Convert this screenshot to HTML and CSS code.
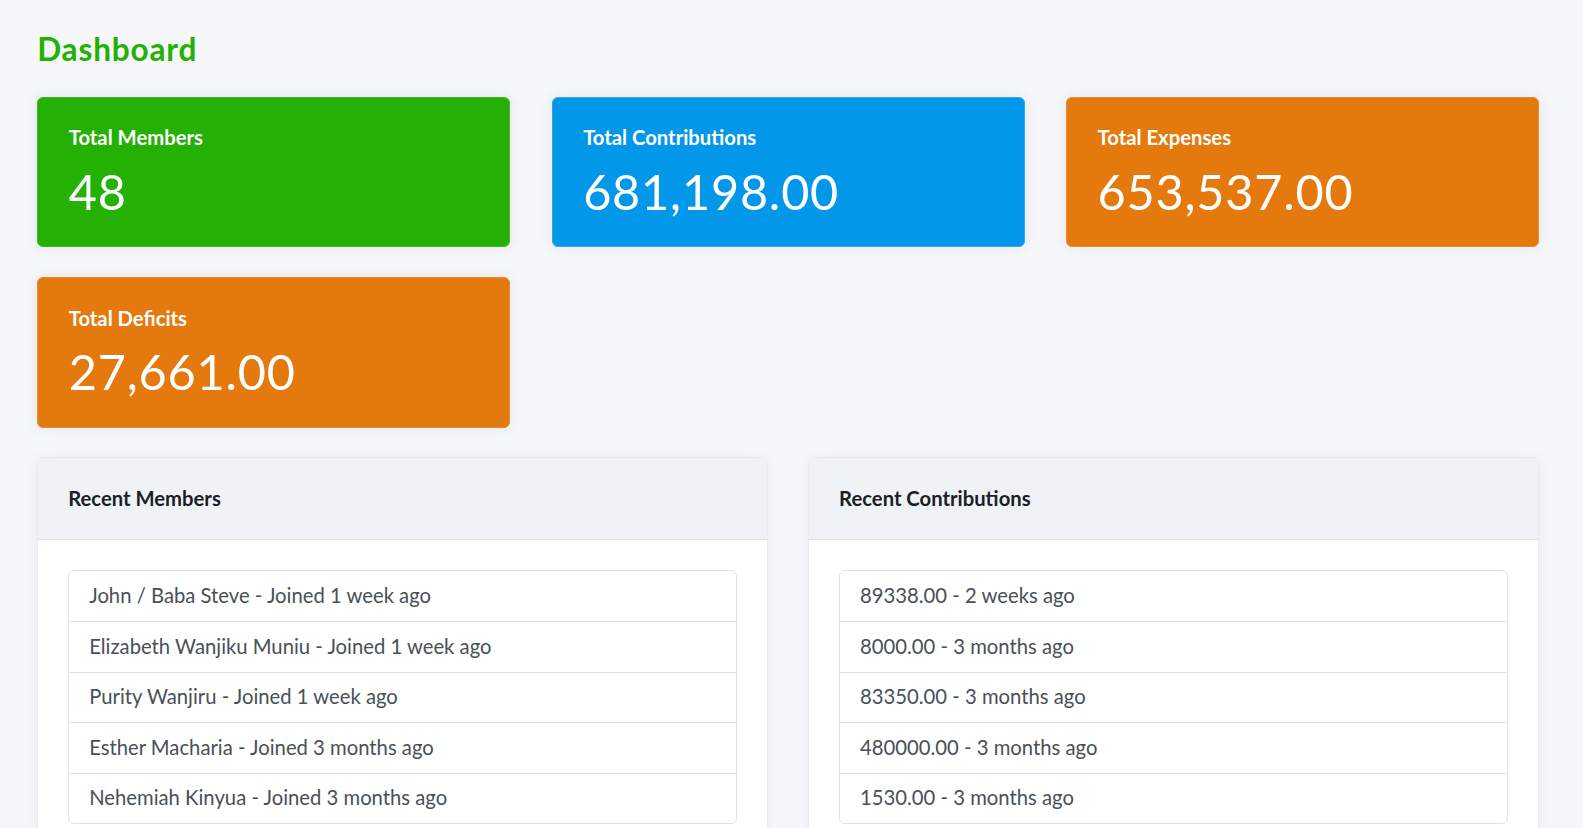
FILE: index.html
```html
<!DOCTYPE html>
<html lang="en">
<head>
  <meta charset="UTF-8">
  <meta name="viewport" content="width=device-width, initial-scale=1.0">
  <title>Dashboard</title>
  <link rel="stylesheet" href="styles.css">
</head>
<body>
  <main class="content">
    <h1 class="page-title">Dashboard</h1>

    <!-- Stat cards -->
    <div class="stats">
      <div class="stat-card stat-green">
        <h5 class="stat-title">Total Members</h5>
        <div class="stat-value">48</div>
      </div>
      <div class="stat-card stat-blue">
        <h5 class="stat-title">Total Contributions</h5>
        <div class="stat-value">681,198.00</div>
      </div>
      <div class="stat-card stat-orange">
        <h5 class="stat-title">Total Expenses</h5>
        <div class="stat-value">653,537.00</div>
      </div>
      <div class="stat-card stat-orange">
        <h5 class="stat-title">Total Deficits</h5>
        <div class="stat-value">27,661.00</div>
      </div>
    </div>

    <!-- Recent lists -->
    <div class="panels">
      <div class="panel">
        <div class="panel-header">
          <h5 class="panel-title">Recent Members</h5>
        </div>
        <div class="panel-body">
          <ul class="list">
            <li>John / Baba Steve - Joined 1 week ago</li>
            <li>Elizabeth Wanjiku Muniu - Joined 1 week ago</li>
            <li>Purity Wanjiru - Joined 1 week ago</li>
            <li>Esther Macharia - Joined 3 months ago</li>
            <li>Nehemiah Kinyua - Joined 3 months ago</li>
          </ul>
        </div>
      </div>

      <div class="panel">
        <div class="panel-header">
          <h5 class="panel-title">Recent Contributions</h5>
        </div>
        <div class="panel-body">
          <ul class="list">
            <li>89338.00 - 2 weeks ago</li>
            <li>8000.00 - 3 months ago</li>
            <li>83350.00 - 3 months ago</li>
            <li>480000.00 - 3 months ago</li>
            <li>1530.00 - 3 months ago</li>
          </ul>
        </div>
      </div>
    </div>
  </main>
</body>
</html>
```

FILE: styles.css
```css
/* Reset */
* {
  margin: 0;
  padding: 0;
  box-sizing: border-box;
}

body {
  font-family: Lato, "Open Sans", sans-serif;
  font-size: 20.25px;
  line-height: 1.5;
  background-color: #f5f7fb;
  color: #495057;
}

/* Main content area */
.content {
  padding: 30.8px 44px 0 37.2px;
}

.page-title {
  font-size: 31.6px;
  font-weight: 700;
  line-height: 1.2;
  letter-spacing: 0.8px;
  color: #24b004;
  margin-bottom: 28px;
}

/* Stat cards */
.stats {
  display: grid;
  grid-template-columns: repeat(3, 1fr);
  column-gap: 41.5px;
  row-gap: 30px;
}

.stat-card {
  padding: 27.5px 30.5px 26.5px;
  border-radius: 6px;
  color: #fff;
  box-shadow: 0 0 14px 0 rgba(33, 40, 50, 0.08);
}

.stat-green {
  background-color: #24b004;
  border: 1px solid #3fba26;
}

.stat-blue {
  background-color: #0397e9;
  border: 1px solid #2ea6ec;
}

.stat-orange {
  background-color: #e4790d;
  border: 1px solid #e88c30;
}

.stat-title {
  font-size: 20.25px;
  font-weight: 700;
  line-height: 1.2;
  margin-bottom: 12px;
}

.stat-value {
  font-size: 48.6px;
  font-weight: 400;
  line-height: 1.2;
  letter-spacing: 0.8px;
}

/* Panels */
.panels {
  display: grid;
  grid-template-columns: 1fr 1fr;
  gap: 40px;
  margin-top: 29.5px;
}

.panel {
  background-color: #fff;
  border: 1px solid #e9ecef;
  border-radius: 6px;
  box-shadow: 0 0 14px 0 rgba(33, 40, 50, 0.05);
  overflow: hidden;
}

.panel-header {
  background-color: #eff2f7;
  border-bottom: 1px solid #dee2e6;
  padding: 27.5px 30px 29px;
}

.panel-title {
  font-size: 20.25px;
  font-weight: 700;
  line-height: 1.2;
  color: #1c2025;
}

.panel-body {
  padding: 30.2px 30px;
}

/* List group */
.list {
  list-style: none;
  border: 1px solid #dee2e6;
  border-radius: 6px;
}

.list li {
  padding: 8.7px 20px 10.5px;
  line-height: 1.5;
  color: #495057;
  border-bottom: 1px solid #dee2e6;
}

.list li:last-child {
  border-bottom: none;
}
```
